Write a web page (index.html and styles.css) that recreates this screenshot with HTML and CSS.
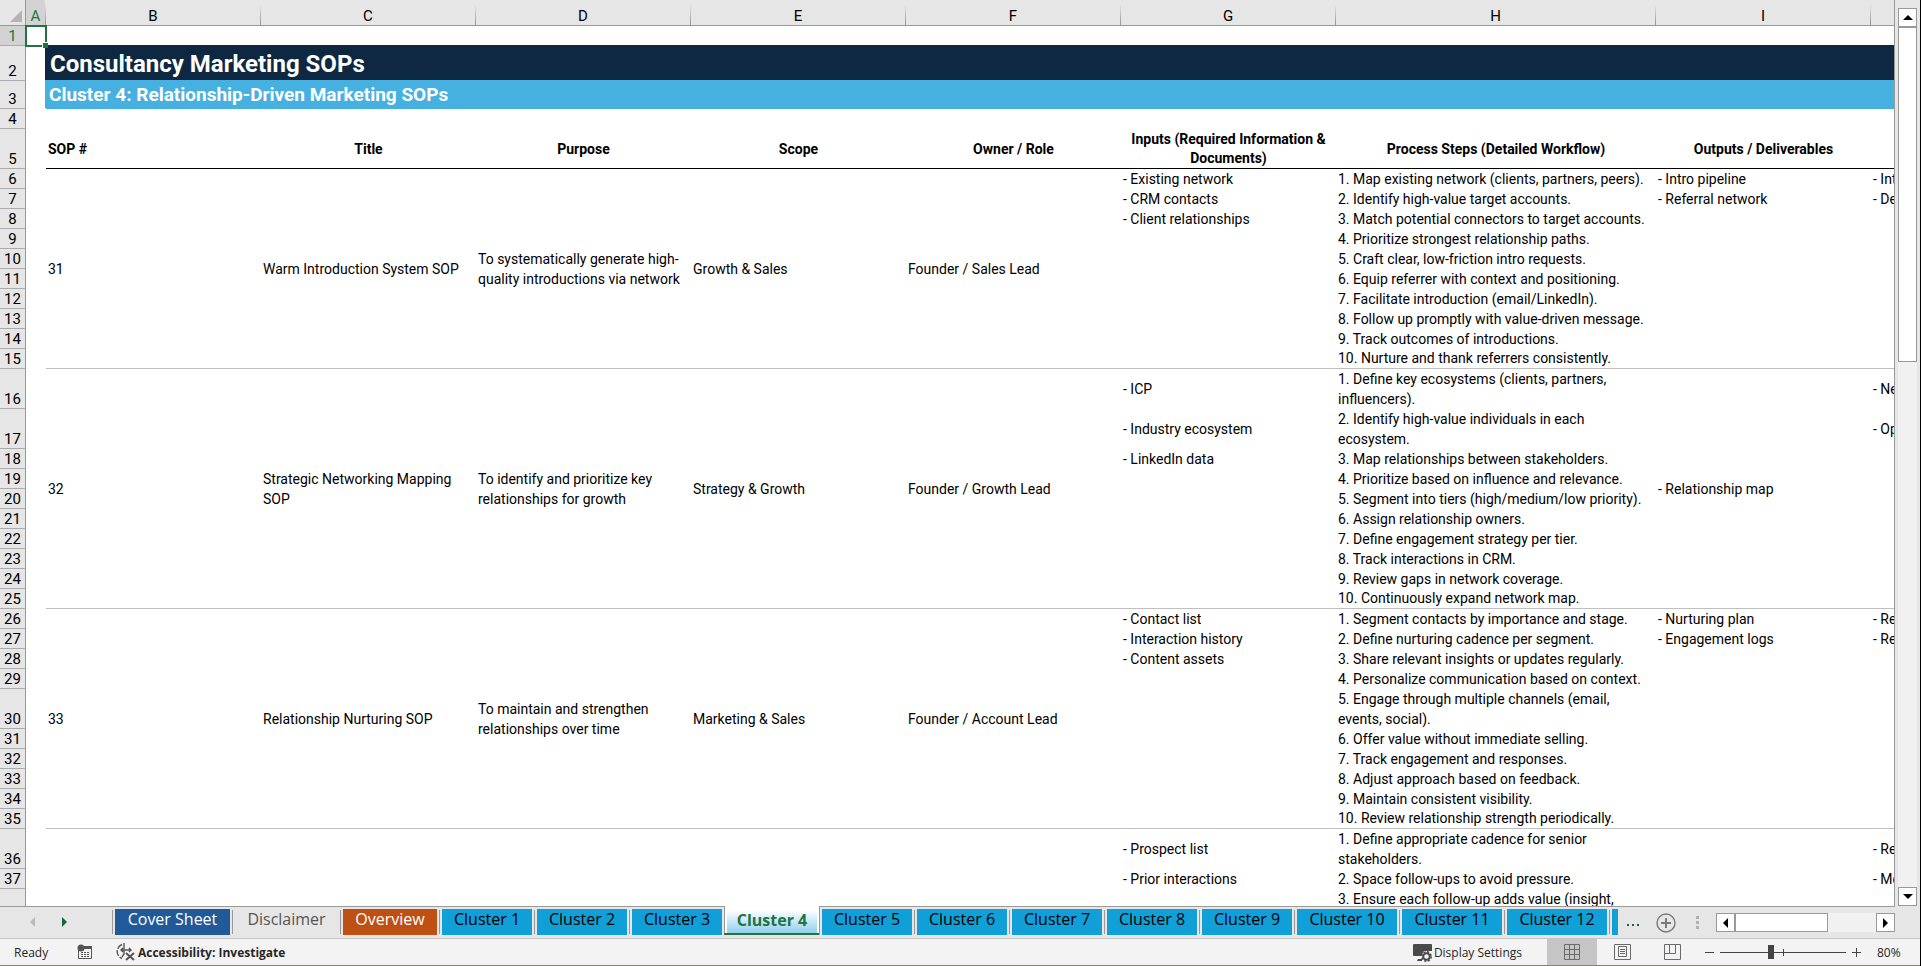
FILE: index.html
```html
<!DOCTYPE html>
<html lang="en">
<head>
    <meta charset="UTF-8">
    <meta name="viewport" content="width=device-width, initial-scale=1.0">
    <title>Consultancy Marketing SOPs</title>
    <link rel="stylesheet" href="styles.css">
</head>
<body>
    <main class="workspace">
        <div class="sheet">
            <table class="grid">
                <colgroup>
                    <col class="col-rownum">
                    <col class="col-a">
                    <col class="col-std">
                    <col class="col-std">
                    <col class="col-std">
                    <col class="col-std">
                    <col class="col-std">
                    <col class="col-std">
                    <col class="col-h">
                    <col class="col-std">
                    <col class="col-std">
                </colgroup>
                <thead>
                    <tr>
                        <th class="corner"><svg width="25" height="25" viewBox="0 0 25 25"><path d="M22 10v12H10z" fill="#b4b4b4"/></svg></th>
                        <th class="active">A</th><th>B</th><th>C</th><th>D</th><th>E</th><th>F</th><th>G</th><th>H</th><th>I</th><th></th>
                    </tr>
                </thead>
                <tbody>
                    <tr><th class="active">1</th><td class="selected"></td><td colspan="9"></td></tr>
                    <tr class="r35"><th>2</th><td></td><td colspan="9" class="title">Consultancy Marketing SOPs</td></tr>
                    <tr class="r28"><th>3</th><td></td><td colspan="9" class="subtitle">Cluster 4: Relationship-Driven Marketing SOPs</td></tr>
                    <tr><th>4</th><td></td><td colspan="9"></td></tr>
                    <tr class="r40 headings"><th>5</th><td></td><td class="left">SOP #</td><td>Title</td><td>Purpose</td><td>Scope</td><td>Owner / Role</td><td>Inputs (Required Information &amp; Documents)</td><td>Process Steps (Detailed Workflow)</td><td>Outputs / Deliverables</td><td></td></tr>

                    <tr><th>6</th><td></td><td rowspan="10" class="end">31</td><td rowspan="10" class="end">Warm Introduction System SOP</td><td rowspan="10" class="end">To systematically generate high-<br>quality introductions via network</td><td rowspan="10" class="end">Growth &amp; Sales</td><td rowspan="10" class="end">Founder / Sales Lead</td><td>- Existing network</td><td>1. Map existing network (clients, partners, peers).</td><td>- Intro pipeline</td><td>- Int</td></tr>
                    <tr><th>7</th><td></td><td>- CRM contacts</td><td>2. Identify high-value target accounts.</td><td>- Referral network</td><td>- De</td></tr>
                    <tr><th>8</th><td></td><td>- Client relationships</td><td>3. Match potential connectors to target accounts.</td><td></td><td></td></tr>
                    <tr><th>9</th><td></td><td></td><td>4. Prioritize strongest relationship paths.</td><td></td><td></td></tr>
                    <tr><th>10</th><td></td><td></td><td>5. Craft clear, low-friction intro requests.</td><td></td><td></td></tr>
                    <tr><th>11</th><td></td><td></td><td>6. Equip referrer with context and positioning.</td><td></td><td></td></tr>
                    <tr><th>12</th><td></td><td></td><td>7. Facilitate introduction (email/LinkedIn).</td><td></td><td></td></tr>
                    <tr><th>13</th><td></td><td></td><td>8. Follow up promptly with value-driven message.</td><td></td><td></td></tr>
                    <tr><th>14</th><td></td><td></td><td>9. Track outcomes of introductions.</td><td></td><td></td></tr>
                    <tr class="last"><th>15</th><td></td><td></td><td>10. Nurture and thank referrers consistently.</td><td></td><td></td></tr>

                    <tr class="r40"><th>16</th><td></td><td rowspan="10" class="end">32</td><td rowspan="10" class="end">Strategic Networking Mapping<br>SOP</td><td rowspan="10" class="end">To identify and prioritize key<br>relationships for growth</td><td rowspan="10" class="end">Strategy &amp; Growth</td><td rowspan="10" class="end">Founder / Growth Lead</td><td>- ICP</td><td>1. Define key ecosystems (clients, partners,<br>influencers).</td><td rowspan="10" class="end">- Relationship map</td><td>- Ne</td></tr>
                    <tr class="r40"><th>17</th><td></td><td>- Industry ecosystem</td><td>2. Identify high-value individuals in each<br>ecosystem.</td><td>- Op</td></tr>
                    <tr><th>18</th><td></td><td>- LinkedIn data</td><td>3. Map relationships between stakeholders.</td><td></td></tr>
                    <tr><th>19</th><td></td><td></td><td>4. Prioritize based on influence and relevance.</td><td></td></tr>
                    <tr><th>20</th><td></td><td></td><td>5. Segment into tiers (high/medium/low priority).</td><td></td></tr>
                    <tr><th>21</th><td></td><td></td><td>6. Assign relationship owners.</td><td></td></tr>
                    <tr><th>22</th><td></td><td></td><td>7. Define engagement strategy per tier.</td><td></td></tr>
                    <tr><th>23</th><td></td><td></td><td>8. Track interactions in CRM.</td><td></td></tr>
                    <tr><th>24</th><td></td><td></td><td>9. Review gaps in network coverage.</td><td></td></tr>
                    <tr class="last"><th>25</th><td></td><td></td><td>10. Continuously expand network map.</td><td></td></tr>

                    <tr><th>26</th><td></td><td rowspan="10" class="end">33</td><td rowspan="10" class="end">Relationship Nurturing SOP</td><td rowspan="10" class="end">To maintain and strengthen<br>relationships over time</td><td rowspan="10" class="end">Marketing &amp; Sales</td><td rowspan="10" class="end">Founder / Account Lead</td><td>- Contact list</td><td>1. Segment contacts by importance and stage.</td><td>- Nurturing plan</td><td>- Re</td></tr>
                    <tr><th>27</th><td></td><td>- Interaction history</td><td>2. Define nurturing cadence per segment.</td><td>- Engagement logs</td><td>- Re</td></tr>
                    <tr><th>28</th><td></td><td>- Content assets</td><td>3. Share relevant insights or updates regularly.</td><td></td><td></td></tr>
                    <tr><th>29</th><td></td><td></td><td>4. Personalize communication based on context.</td><td></td><td></td></tr>
                    <tr class="r40"><th>30</th><td></td><td></td><td>5. Engage through multiple channels (email,<br>events, social).</td><td></td><td></td></tr>
                    <tr><th>31</th><td></td><td></td><td>6. Offer value without immediate selling.</td><td></td><td></td></tr>
                    <tr><th>32</th><td></td><td></td><td>7. Track engagement and responses.</td><td></td><td></td></tr>
                    <tr><th>33</th><td></td><td></td><td>8. Adjust approach based on feedback.</td><td></td><td></td></tr>
                    <tr><th>34</th><td></td><td></td><td>9. Maintain consistent visibility.</td><td></td><td></td></tr>
                    <tr class="last"><th>35</th><td></td><td></td><td>10. Review relationship strength periodically.</td><td></td><td></td></tr>

                    <tr class="r40"><th>36</th><td></td><td colspan="5"></td><td>- Prospect list</td><td>1. Define appropriate cadence for senior<br>stakeholders.</td><td></td><td>- Re</td></tr>
                    <tr><th>37</th><td></td><td colspan="5"></td><td>- Prior interactions</td><td>2. Space follow-ups to avoid pressure.</td><td></td><td>- Me</td></tr>
                    <tr class="r40 top"><th></th><td></td><td colspan="5"></td><td></td><td>3. Ensure each follow-up adds value (insight,</td><td></td><td></td></tr>
                </tbody>
            </table>
        </div>
        <div class="vscroll">
            <button type="button" class="arrow" aria-label="Scroll up"><svg width="10" height="5"><path d="M5 0l5 5H0z"/></svg></button>
            <div class="vtrack"><div class="vthumb"></div></div>
            <button type="button" class="arrow" aria-label="Scroll down"><svg width="10" height="5"><path d="M0 0h10L5 5z"/></svg></button>
        </div>
    </main>

    <nav class="tabbar">
        <div class="tabnav">
            <button type="button" aria-label="Previous sheets"><svg width="5" height="10"><path d="M5 0v10L0 5z" fill="#b9b9b9"/></svg></button>
            <button type="button" aria-label="Next sheets"><svg width="5" height="10"><path d="M0 0v10l5-5z" fill="#0e6a38"/></svg></button>
        </div>
        <div class="tabs">
            <button type="button" class="tab navy"><span>Cover Sheet</span></button>
            <button type="button" class="tab plain"><span>Disclaimer</span></button>
            <button type="button" class="tab orange"><span>Overview</span></button>
            <button type="button" class="tab"><span>Cluster 1</span></button>
            <button type="button" class="tab"><span>Cluster 2</span></button>
            <button type="button" class="tab"><span>Cluster 3</span></button>
            <button type="button" class="tab current"><span>Cluster 4</span></button>
            <button type="button" class="tab after"><span>Cluster 5</span></button>
            <button type="button" class="tab"><span>Cluster 6</span></button>
            <button type="button" class="tab"><span>Cluster 7</span></button>
            <button type="button" class="tab"><span>Cluster 8</span></button>
            <button type="button" class="tab"><span>Cluster 9</span></button>
            <button type="button" class="tab wide"><span>Cluster 10</span></button>
            <button type="button" class="tab wide"><span>Cluster 11</span></button>
            <button type="button" class="tab wide"><span>Cluster 12</span></button>
            <button type="button" class="tab sliver" aria-label="Next sheet"><span></span></button>
        </div>
        <button type="button" class="more" aria-label="More sheets"><svg width="14" height="3"><path d="M0 0h2v2H0zM5 0h2v2H5zM10 0h2v2h-2z" fill="#0e6a38"/></svg></button>
        <button type="button" class="add" aria-label="New sheet"><svg width="20" height="20" fill="none" stroke="#7a7a7a"><circle cx="10" cy="10" r="9" stroke-width="1.4"/><path d="M10 5v10M5 10h10" stroke-width="2"/></svg></button>
        <svg class="grip" width="3" height="13" fill="#b0b0b0"><path d="M0 0h3v3H0zM0 5h3v3H0zM0 10h3v3H0z"/></svg>
        <div class="hscroll">
            <button type="button" class="arrow" aria-label="Scroll left"><svg width="5" height="10"><path d="M5 0v10L0 5z"/></svg></button>
            <div class="htrack"><div class="hthumb"></div></div>
            <button type="button" class="arrow" aria-label="Scroll right"><svg width="5" height="10"><path d="M0 0v10l5-5z"/></svg></button>
        </div>
    </nav>

    <footer class="status">
        <span class="ready">Ready</span>
        <button type="button" class="macro" aria-label="Record macro"><svg width="16" height="16" viewBox="0 0 16 16"><path d="M7 2h8v3H6z" fill="#555"/><path d="M1.500 6v8.500h13V4" fill="none" stroke="#555"/><circle cx="4" cy="4" r="3.500" fill="#555"/><path d="M4 8.500h2M7 8.500h2M10 8.500h2M4 10.500h2M7 10.500h2M10 10.500h2M4 12.500h2M7 12.500h2M10 12.500h2" stroke="#555"/></svg></button>
        <button type="button" class="access"><svg width="20" height="18" viewBox="0 0 20 18" fill="none" stroke="#555"><path d="M6 1.500A7.500 7.500 0 0 0 6 15.500" stroke-width="1.400" stroke-dasharray="6 1.500"/><path d="M8 0v6M5 7h10M7 5L5 7l2 2M13 5l2 2-2 2M8 7v4l-2 3" stroke-width="1.400"/><path d="M10 10l8 7M18 10l-8 7" stroke-width="2"/></svg><span>Accessibility: Investigate</span></button>
        <button type="button" class="display"><svg width="20" height="19" viewBox="0 0 20 19"><path d="M1 1h17a1 1 0 0 1 1 1v6H11L8 13H1a1 1 0 0 1-1-1V2a1 1 0 0 1 1-1zM5 16h4v2H4z" fill="#4a4a4a"/><circle cx="13.500" cy="13.500" r="3.300" fill="none" stroke="#4a4a4a" stroke-width="2"/><circle cx="13.500" cy="13.500" r="4.700" fill="none" stroke="#4a4a4a" stroke-width="1.500" stroke-dasharray="2.200 1.490"/></svg><span>Display Settings</span></button>
        <button type="button" class="view on" aria-label="Normal view"><svg width="16" height="16" fill="none" stroke="#6a6a6a"><path d="M.5.500h15v15H.5zM.5 5.500h15M.5 10.500h15M5.500.500v15M10.500.500v15"/></svg></button>
        <button type="button" class="view" aria-label="Page layout"><svg width="17" height="16" fill="none" stroke="#6a6a6a"><path d="M.5.500h16v15H.5zM4.500 2.500h8v10h-8zM6 5.500h5M6 7.500h5M6 9.500h5"/></svg></button>
        <button type="button" class="view" aria-label="Page break preview"><svg width="17" height="16" fill="none" stroke="#6a6a6a"><path d="M.5.500h16v15H.5zM5.500.500v9M11.500.500v9M.5 9.500h11"/></svg></button>
        <div class="zoom">
            <button type="button" aria-label="Zoom out"><svg width="9" height="9"><path d="M0 4h9v1H0z" fill="#444"/></svg></button>
            <input type="range" min="0" max="100" value="40" aria-label="Zoom">
            <button type="button" aria-label="Zoom in"><svg width="9" height="9"><path d="M0 4h9v1H0zM4 0h1v9H4z" fill="#444"/></svg></button>
        </div>
        <span class="percent">80%</span>
    </footer>
</body>
</html>
```
FILE: styles.css
```css
* {
    box-sizing: border-box;
}
body {
    margin: 0;
    height: 100vh;
    display: flex;
    flex-direction: column;
    overflow: hidden;
    background: #e6e6e6;
    border-right: 1px solid #000;
    font-family: Roboto, "Liberation Sans", sans-serif;
    font-size: 14px;
    color: #000;
}
button {
    margin: 0;
    padding: 0;
    border: none;
    background: none;
    font: inherit;
    color: inherit;
}
svg {
    display: block;
    flex: none;
}

/* sheet */
.workspace {
    flex: 1;
    min-height: 0;
    display: flex;
}
.sheet {
    flex: 1;
    min-width: 0;
    overflow: hidden;
    border-right: 1px solid #999;
    background: #fff;
}
.grid {
    width: 2086px;
    table-layout: fixed;
    border-collapse: separate;
    border-spacing: 0;
}
.col-rownum { width: 26px; }
.col-a { width: 20px; }
.col-std { width: 215px; }
.col-h { width: 320px; }
.grid th {
    padding: 0;
    font-weight: 400;
    background: #e6e6e6;
}
.grid thead th {
    height: 26px;
    padding-top: 7px;
    line-height: 18px;
    font-size: 15px;
    border-bottom: 1px solid #999;
    border-right: 1px solid transparent;
    border-image: linear-gradient(#e6e6e6 20%, #999 90%) 1;
}
.grid thead th.corner {
    padding: 0;
    border-image: none;
    border-color: #999;
}
.grid thead th.active,
.grid tbody th.active {
    background: #d2d2d2;
    color: #217346;
}
.grid tbody th {
    height: 20px;
    font-size: 15px;
    line-height: 18px;
    vertical-align: bottom;
    border-right: 1px solid #999;
    border-bottom: 1px solid #ababab;
}
.grid td {
    padding: 0 2px;
    line-height: 20px;
    white-space: nowrap;
}
.grid .r28 th { height: 28px; }
.grid .r35 th { height: 35px; }
.grid .r40 th { height: 40px; }
.grid .top td { vertical-align: top; }
.grid .selected {
    position: relative;
    outline: 2px solid #217346;
    outline-offset: -1px;
    z-index: 1;
}
.grid .selected::after {
    content: "";
    position: absolute;
    right: -2px;
    bottom: -2px;
    width: 5px;
    height: 5px;
    background: #217346;
    box-shadow: -1px -1px #fff;
}
.grid .title {
    padding-left: 4px;
    line-height: 34px;
    font-size: 24px;
    font-weight: 700;
    color: #fff;
    background: #0f2842;
    box-shadow: -1px -1px #0f2842;
}
.grid .subtitle {
    padding-left: 3px;
    line-height: 26px;
    font-size: 19px;
    font-weight: 700;
    color: #fff;
    background: #46b1e1;
    box-shadow: -1px -1px #46b1e1;
}
.grid .headings td {
    padding-top: 1px;
    font-weight: 700;
    text-align: center;
    white-space: normal;
    line-height: 19px;
    border-bottom: 1px solid #000;
}
.grid .headings td.left { text-align: left; }
.grid .headings td:nth-child(2) { border-bottom: none; }
.grid .end,
.grid .last td:not(:nth-child(2)) {
    border-bottom: 1px solid #bfbfbf;
}
.grid .last td { line-height: 19px; }

/* scrollbars */
.arrow {
    flex: none;
    width: 19px;
    height: 19px;
    display: flex;
    align-items: center;
    justify-content: center;
    background: #fff;
    border: 1px solid #999;
}
.vscroll {
    width: 25px;
    padding: 8px 3px 0;
    display: flex;
    flex-direction: column;
}
.vtrack {
    flex: 1;
    background: #f1f1f1;
}
.vthumb {
    height: 39%;
    background: #fff;
    border: 1px solid #999;
}

/* sheet tabs */
.tabbar {
    height: 33px;
    display: flex;
    align-items: flex-start;
    background: linear-gradient(#999, #999) 0 0 / calc(100% - 25px) 1px no-repeat;
    border-bottom: 1px solid #c6c6c6;
    font-family: "Open Sans", "Noto Sans", sans-serif;
    font-size: 16px;
}
.tabnav {
    flex: none;
    width: 112px;
    height: 32px;
    padding: 0 45px 0 30px;
    display: flex;
    align-items: center;
    justify-content: space-between;
}
.tabs {
    display: flex;
    min-width: 0;
}
.tab {
    flex: none;
    width: 95px;
    height: 29px;
    padding: 3px 2px 0 3px;
    background: linear-gradient(#999, #999) 0 4px / 1px 24px no-repeat;
}
.tab span {
    display: block;
    height: 26px;
    line-height: 21px;
    background: #119fd8;
}
.tab.wide { width: 105px; }
.tab.navy { width: 120px; }
.tab.navy span { background: #205a99; color: #fff; }
.tab.plain { width: 108px; color: #555; }
.tab.plain span { background: none; }
.tab.orange { width: 99px; }
.tab.orange span { background: #be5014; color: #fff; }
.tab.current {
    border-bottom: 2px solid #217346;
    background: #fff;
    box-shadow: inset 1px 0 #999;
    font-weight: 700;
    color: #217346;
}
.tab.current span {
    height: 23px;
    background: linear-gradient(#fff, #8ed0ec);
}
.tab.after { background-size: 1px 29px; background-position: 0 0; }
.tab.sliver { width: 9px; padding-right: 0; }
.more {
    flex: none;
    width: 38px;
    height: 32px;
    padding: 6px 0 0 9px;
    display: flex;
    align-items: center;
}
.add {
    height: 32px;
    margin-right: auto;
    padding-top: 1px;
    display: flex;
    align-items: center;
}
.grip {
    margin: 10px 17px 0 0;
}
.hscroll {
    width: 179px;
    margin: 7px 25px 0 0;
    display: flex;
}
.htrack {
    flex: 1;
    background: #f1f1f1;
}
.hthumb {
    width: 66%;
    height: 19px;
    background: #fff;
    border: 1px solid #999;
}

/* status bar */
.status {
    height: 27px;
    display: flex;
    align-items: center;
    background: #f3f3f3;
    border-bottom: 1px solid #85836f;
    font-family: "Open Sans", "Noto Sans", sans-serif;
    font-size: 12px;
    color: #262626;
}
.ready {
    width: 63px;
    margin-left: 14px;
}
.macro { margin-right: 23px; }
.access {
    display: flex;
    align-items: center;
    gap: 2px;
    font-weight: 700;
}
.display {
    margin-left: auto;
    margin-right: 25px;
    display: flex;
    align-items: center;
    gap: 1px;
}
.view {
    width: 50px;
    height: 26px;
    display: flex;
    align-items: center;
    justify-content: center;
}
.view.on { background: #c6c6c6; }
.zoom {
    display: flex;
    align-items: center;
    gap: 6px;
    margin-left: 8px;
}
.zoom input {
    width: 126px;
    height: 20px;
    margin: 0;
    appearance: none;
    background:
        linear-gradient(#444, #444) center / 1px 7px no-repeat,
        linear-gradient(#444, #444) center / 100% 1px no-repeat;
}
.zoom input::-webkit-slider-thumb {
    appearance: none;
    width: 6px;
    height: 14px;
    background: #444;
}
.percent {
    width: 43px;
    margin-left: 16px;
}
```
